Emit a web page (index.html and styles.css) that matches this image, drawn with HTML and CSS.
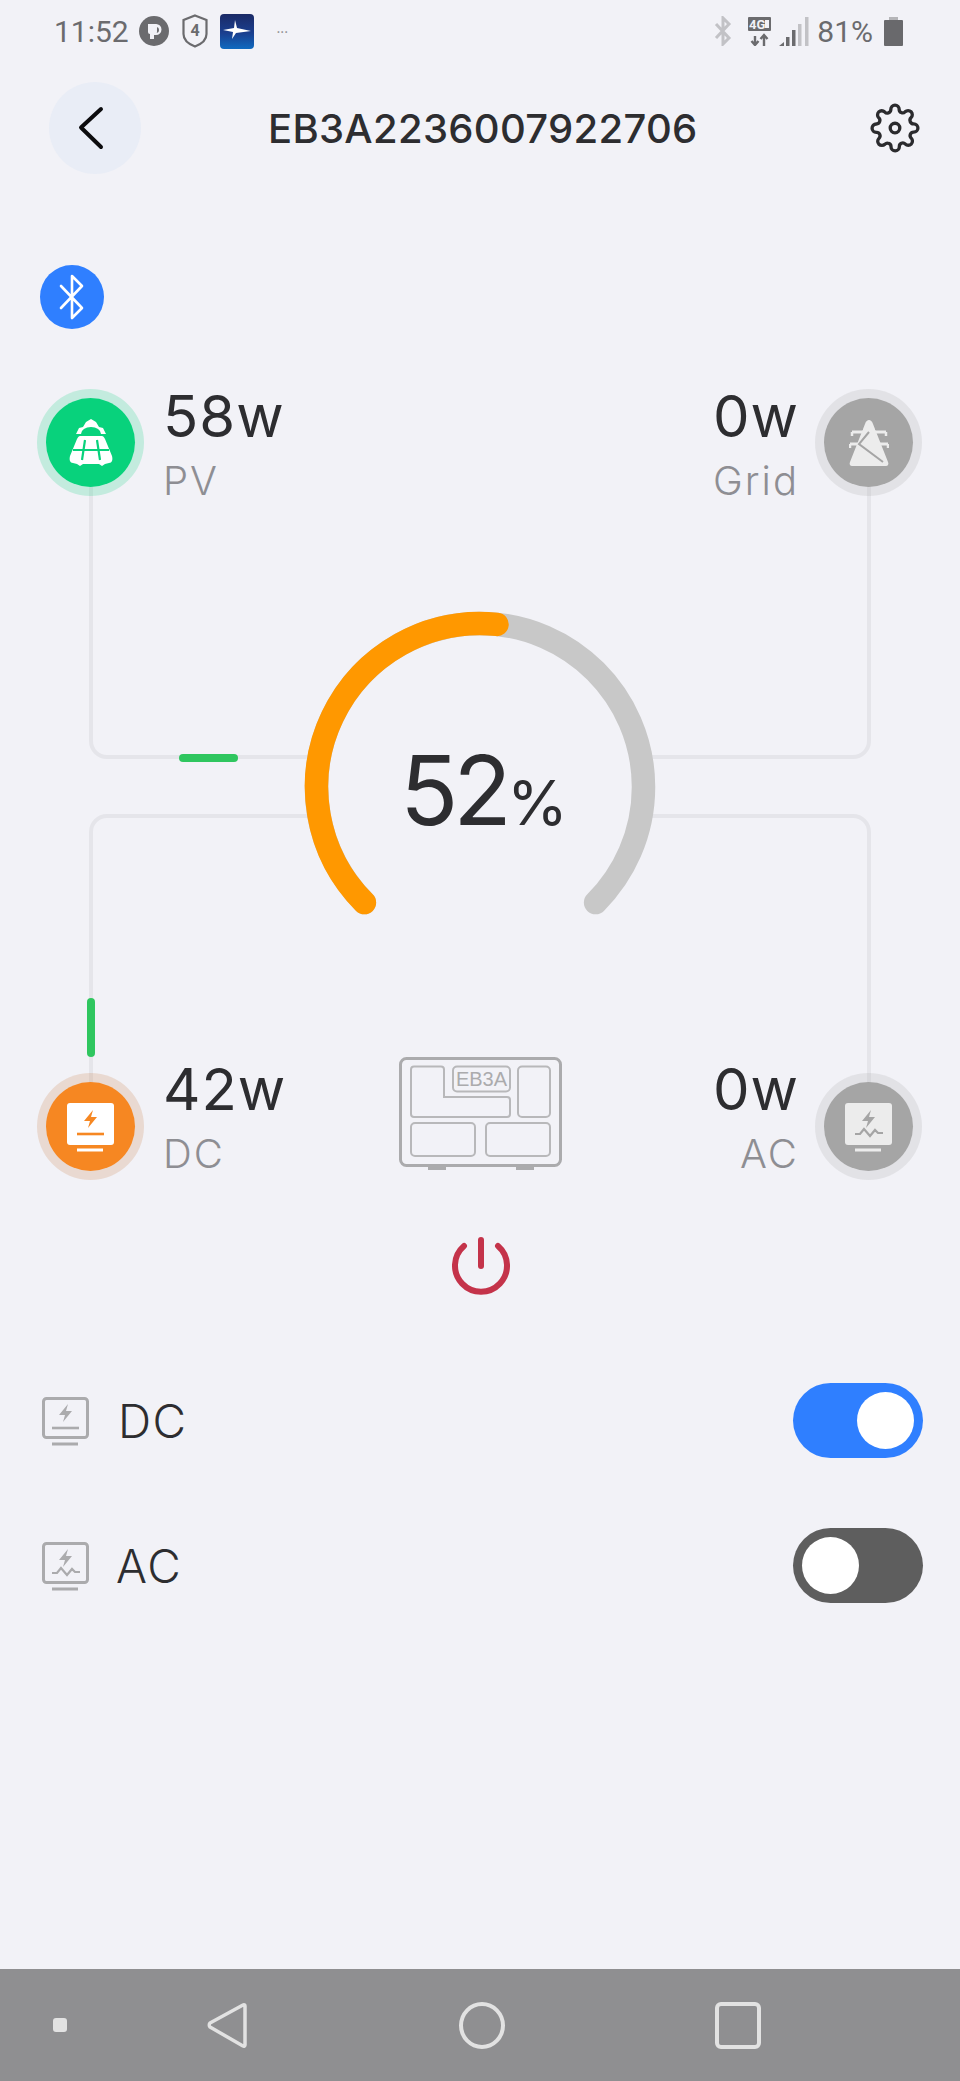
FILE: index.html
```html
<!DOCTYPE html>
<html lang="en">
<head>
  <meta charset="UTF-8" />
  <meta name="viewport" content="width=device-width, initial-scale=1.0"/>
  <title>EB3A2236007922706</title>
  <link rel="stylesheet" href="styles.css">
</head>
<body>
  <div class="screen">

    <!-- Status bar -->
    <div class="status-bar">
      <div class="status-left">
        <span class="status-text clock">11:52</span>
        <svg class="st-p" viewBox="0 0 30 30"><circle cx="15" cy="15" r="15" fill="#6b6b6e"/><path d="M9 8h8a5.500 5.500 0 0 1 0 11h-3v4h-3v-6h6a2.500 2.500 0 0 0 0-6H9z" fill="#f2f2f7"/><rect x="9" y="8" width="9" height="10" rx="2" fill="#f2f2f7"/><rect x="11" y="16" width="4" height="7" fill="#f2f2f7"/></svg>
        <svg class="st-shield" viewBox="0 0 26 34"><path d="M13 1.500 24.500 6v14c0 6-5 10-11.500 12.500C6.500 30 1.500 26 1.500 20V6z" fill="none" stroke="#6b6b6e" stroke-width="2.200"/><text x="13" y="22" text-anchor="middle" class="st-shield-num">4</text></svg>
        <svg class="st-app" viewBox="0 0 34 35">
          <defs><linearGradient id="appBlue" x1="0" y1="0" x2="0" y2="1"><stop offset="0" stop-color="#1b2a66"/><stop offset="0.55" stop-color="#1a3f8f"/><stop offset="1" stop-color="#0f6ac0"/></linearGradient></defs>
          <rect width="34" height="35" rx="4" fill="url(#appBlue)"/>
          <path d="M15 6l2 8 14 3-15 2-4 6 1-7-10-2 11-2z" fill="#fff"/>
        </svg>
        <span class="status-dots">•••</span>
      </div>
      <div class="status-right">
        <svg class="st-bt" viewBox="0 0 18 30"><path d="M2 8l13 14-6 6V2l6 6L2 22" fill="none" stroke="#c2c2c6" stroke-width="3"/></svg>
        <svg class="st-4g" viewBox="0 0 23 29"><rect width="23" height="14" rx="1" fill="#6b6b6e"/><text x="1" y="12" class="st-4g-text">4G</text><rect x="17" y="3" width="4" height="8" fill="#f2f2f7"/><path d="M7 29v-10M3.500 24l3.500 4 3.500-4M16 29V18M12.500 22l3.500-4 3.500 4" fill="none" stroke="#6b6b6e" stroke-width="2.400"/></svg>
        <svg class="st-signal" viewBox="0 0 30 29"><path d="M0 29l5-4v4z" fill="#6b6b6e"/><rect x="7" y="20" width="3.500" height="9" fill="#6b6b6e"/><rect x="13" y="13" width="3.500" height="16" fill="#6b6b6e"/><rect x="19" y="7" width="3.500" height="22" fill="#c2c2c6"/><rect x="26" y="0" width="3.500" height="29" fill="#c2c2c6"/></svg>
        <span class="status-text">81%</span>
        <svg class="st-batt" viewBox="0 0 19 29"><rect x="5" y="0" width="9" height="4" fill="#b5b5b8"/><rect y="3" width="19" height="26" rx="1" fill="#69696c"/></svg>
      </div>
    </div>

    <!-- Header -->
    <div class="header">
      <div class="back-btn">
        <svg viewBox="0 0 26 44" class="back-icon"><path d="M23 3 3 21.500 23 41" fill="none" stroke="#0c0c0e" stroke-width="4" stroke-linecap="round" stroke-linejoin="round"/></svg>
      </div>
      <h1 class="title">EB3A2236007922706</h1>
      <svg class="gear" viewBox="0 0 24 24" fill="none" stroke="#2b2b2e" stroke-width="1.600">
        <circle cx="12" cy="12" r="2.300"/>
        <path d="M19.400 15a1.650 1.650 0 0 0 .33 1.820l.06.06a2 2 0 0 1 0 2.830 2 2 0 0 1-2.830 0l-.06-.06a1.650 1.650 0 0 0-1.820-.33 1.650 1.650 0 0 0-1 1.510V21a2 2 0 0 1-2 2 2 2 0 0 1-2-2v-.09A1.650 1.650 0 0 0 9 19.400a1.650 1.650 0 0 0-1.820.33l-.06.06a2 2 0 0 1-2.830 0 2 2 0 0 1 0-2.830l.06-.06a1.650 1.650 0 0 0 .33-1.820 1.650 1.650 0 0 0-1.510-1H3a2 2 0 0 1-2-2 2 2 0 0 1 2-2h.09A1.650 1.650 0 0 0 4.600 9a1.650 1.650 0 0 0-.33-1.820l-.06-.06a2 2 0 0 1 0-2.830 2 2 0 0 1 2.830 0l.06.06a1.650 1.650 0 0 0 1.820.33H9a1.650 1.650 0 0 0 1-1.510V3a2 2 0 0 1 2-2 2 2 0 0 1 2 2v.09a1.650 1.650 0 0 0 1 1.510 1.650 1.650 0 0 0 1.820-.33l.06-.06a2 2 0 0 1 2.830 0 2 2 0 0 1 0 2.830l-.06.06a1.650 1.650 0 0 0-.33 1.820V9a1.650 1.650 0 0 0 1.510 1H21a2 2 0 0 1 2 2 2 2 0 0 1-2 2h-.09a1.650 1.650 0 0 0-1.510 1z"/>
      </svg>
    </div>

    <!-- Bluetooth -->
    <div class="bt-badge">
      <svg viewBox="0 0 26 46" class="bt-icon"><path d="M2 12l21 22-10 10V2l10 10L2 34" fill="none" stroke="#fff" stroke-width="2.600" stroke-linejoin="round" stroke-linecap="round"/></svg>
    </div>

    <!-- Energy flow diagram -->
    <div class="flow">
      <svg class="flow-lines" viewBox="0 380 960 830">
        <g fill="none" stroke="#e5e5ea" stroke-width="4">
          <path d="M91 442V741a16 16 0 0 0 16 16H320"/>
          <path d="M869 442V741a16 16 0 0 1-16 16H640"/>
          <path d="M91 1126V832a16 16 0 0 1 16-16H320"/>
          <path d="M869 1126V832a16 16 0 0 0-16-16H640"/>
        </g>
        <g stroke="#2fc65f" stroke-width="8" stroke-linecap="round">
          <path d="M183 758H234"/>
          <path d="M91 1002V1053"/>
        </g>
        <g fill="none" stroke-width="23.500" stroke-linecap="round">
          <path d="M364.400 902.600A163.500 163.500 0 1 1 595.600 902.600" stroke="#c8c8c8"/>
          <path d="M364.400 902.600A163.500 163.500 0 0 1 497 624.400" stroke="#ff9800"/>
        </g>
      </svg>

      <div class="gauge-label"><span class="gauge-num">52</span><span class="gauge-unit">%</span></div>

      <div class="node node-pv">
        <svg viewBox="0 0 44 48" class="node-icon-pv">
          <path d="M7 15l3-6 4-1 3-5 5-3 5 3 3 5 4 1 3 6z" fill="#fff"/>
          <path d="M12 15a10 7 0 0 1 20 0z" fill="#08d27c"/>
          <path d="M11 17h22c1 0 2 1 3 3l7 17c1 4 0 7-3 7l-4 1-3 2-3-2h-16l-3 2-3-2-4-1c-3 0-4-3-3-7l7-17c1-2 2-3 3-3z" fill="#fff"/>
          <path d="M4 31h36M16 21l-3 20M28 21l3 20" stroke="#08d27c" stroke-width="2.200" fill="none"/>
        </svg>
      </div>
      <div class="node node-grid">
        <svg viewBox="0 0 40 46" class="node-icon-grid">
          <path d="M20 0c1.500 0 3 1 4 4l15 38c1 2 0 4-2 4H3c-2 0-3-2-2-4L16 4c1-3 2.500-4 4-4z" fill="#ececec"/>
          <path d="M3 12h34M1 24h38" stroke="#ececec" stroke-width="3" fill="none"/>
          <path d="M3 12v4M37 12v4M1 24v4M39 24v4" stroke="#ececec" stroke-width="2.500" fill="none"/>
          <path d="M3 9h11M26 9h11M1 21h8M31 21h8" stroke="#a5a5a5" stroke-width="1.500" fill="none"/>
          <path d="M20 12 10 24l24 18" stroke="#a5a5a5" stroke-width="2" fill="none"/>
        </svg>
      </div>
      <div class="node node-dc">
        <svg viewBox="0 0 48 50" class="node-icon">
          <rect width="47" height="42" rx="3" fill="#fff"/>
          <path d="M26 7 17 18h6l-2 7 9-11h-6z" fill="#f68722"/>
          <path d="M10 31H37" stroke="#f68722" stroke-width="2.600"/>
          <path d="M10 47H36" stroke="#fff" stroke-width="3"/>
        </svg>
      </div>
      <div class="node node-ac">
        <svg viewBox="0 0 48 50" class="node-icon">
          <rect width="47" height="42" rx="3" fill="#ececec"/>
          <path d="M26 7 17 18h6l-2 7 9-11h-6z" fill="#a5a5a5"/>
          <path d="M10 31h5l4-5 6 7 5-6 3 3h5" stroke="#a5a5a5" stroke-width="2.200" fill="none"/>
          <path d="M10 47H36" stroke="#ececec" stroke-width="3"/>
        </svg>
      </div>

      <div class="stat stat-pv"><div class="stat-value">58w</div><div class="stat-name">PV</div></div>
      <div class="stat stat-grid"><div class="stat-value">0w</div><div class="stat-name">Grid</div></div>
      <div class="stat stat-dc"><div class="stat-value">42w</div><div class="stat-name">DC</div></div>
      <div class="stat stat-ac"><div class="stat-value">0w</div><div class="stat-name">AC</div></div>

      <svg class="device" viewBox="0 0 163 116">
        <rect x="1.500" y="1.500" width="160" height="107" rx="6" fill="none" stroke="#ababad" stroke-width="3"/>
        <path d="M29 110h18v3H29zM117 110h18v3h-18z" fill="#ababad"/>
        <g fill="none" stroke="#b8b8ba" stroke-width="2">
          <path d="M15 9.500h27a3 3 0 0 1 3 3V40h63a3 3 0 0 1 3 3v14a3 3 0 0 1-3 3H15a3 3 0 0 1-3-3V12.500a3 3 0 0 1 3-3z"/>
          <rect x="54" y="9.500" width="57" height="25" rx="4"/>
          <rect x="119" y="9.500" width="32" height="50.500" rx="4"/>
          <rect x="12" y="66" width="64" height="33" rx="4"/>
          <rect x="87" y="66" width="64" height="33" rx="4"/>
        </g>
        <text x="82.500" y="29" text-anchor="middle" class="device-text">EB3A</text>
      </svg>
    </div>

    <!-- Power -->
    <svg class="power" viewBox="0 0 58 58" fill="none" stroke="#c4334a" stroke-width="6" stroke-linecap="round">
      <path d="M12 9a26 26 0 1 0 34 0"/>
      <path d="M29 3V29"/>
    </svg>

    <!-- Outputs -->
    <div class="output-row first">
      <svg viewBox="0 0 48 50" class="row-icon">
        <rect x="1.500" y="1.500" width="44" height="39" rx="3" fill="none" stroke="#ababad" stroke-width="3"/>
        <path d="M26 7 17 18h6l-2 7 9-11h-6z" fill="#ababad"/>
        <path d="M10 31H37" stroke="#ababad" stroke-width="2.600"/>
        <path d="M10 47H36" stroke="#ababad" stroke-width="3"/>
      </svg>
      <span class="row-label">DC</span>
      <div class="toggle on"><div class="knob"></div></div>
    </div>
    <div class="output-row">
      <svg viewBox="0 0 48 50" class="row-icon">
        <rect x="1.500" y="1.500" width="44" height="39" rx="3" fill="none" stroke="#ababad" stroke-width="3"/>
        <path d="M26 7 17 18h6l-2 7 9-11h-6z" fill="#ababad"/>
        <path d="M10 31h5l4-5 6 7 5-6 3 3h5" stroke="#ababad" stroke-width="2.200" fill="none"/>
        <path d="M10 47H36" stroke="#ababad" stroke-width="3"/>
      </svg>
      <span class="row-label row-label-ac">AC</span>
      <div class="toggle"><div class="knob"></div></div>
    </div>

    <!-- Android nav bar -->
    <div class="nav-bar">
      <div class="nav-dot"></div>
      <svg class="nav-back" viewBox="0 0 40 47"><path d="M36 3 3 21c-1 1-1 3 0 4l33 19c1 .5 2 0 2-1V4c0-1-1-1.500-2-1z" fill="none" stroke="#e2e2e2" stroke-width="3.500" stroke-linejoin="round"/></svg>
      <div class="nav-home"></div>
      <div class="nav-recent"></div>
    </div>
  </div>
</body>
</html>
```

FILE: styles.css
```css
:root {
  --bg: #f2f2f7;
  --text-main: #2d2d30;
  --text-muted: #8e8e93;
  --blue: #2f7fff;
  --status: #6b6b6e;
}

body {
  margin: 0;
  background: var(--bg);
  color: var(--text-main);
  font-family: "Inter", sans-serif;
}

.screen {
  width: 960px;
  height: 2081px;
  display: flex;
  flex-direction: column;
  overflow: hidden;
}

/* status bar */
.status-bar {
  height: 62px;
  display: flex;
  justify-content: space-between;
  align-items: center;
  padding: 0 57px 0 54px;
  box-sizing: border-box;
}

.status-left,
.status-right {
  display: flex;
  align-items: center;
}

.status-text {
  font-family: "Roboto", sans-serif;
  font-size: 30px;
  color: var(--status);
}

.st-p { width: 30px; height: 30px; margin-left: 10px; }
.st-shield { width: 26px; height: 34px; margin-left: 13px; }
.st-shield-num { font-family: "Roboto", sans-serif; font-size: 16px; font-weight: 700; fill: #6b6b6e; }
.st-app { width: 34px; height: 35px; margin-left: 12px; }
.status-dots { font-size: 6px; color: #8a8a8d; margin-left: 23px; letter-spacing: 0.5px; }

.st-bt { width: 18px; height: 30px; margin-right: 16px; }
.st-4g { width: 23px; height: 29px; margin-right: 8px; }
.st-4g-text { font-family: "Roboto", sans-serif; font-size: 13px; font-weight: 700; fill: #f2f2f7; }
.st-signal { width: 30px; height: 29px; margin-right: 8px; }
.st-batt { width: 19px; height: 29px; margin-left: 11px; }

/* header */
.header {
  height: 92px;
  margin-top: 20px;
  padding: 0 40px 0 49px;
  display: flex;
  align-items: center;
}

.back-btn {
  width: 92px;
  height: 92px;
  border-radius: 50%;
  background: #e9edf6;
  display: flex;
  align-items: center;
  justify-content: center;
}

.back-icon { width: 26px; height: 44px; margin-right: 8px; }

.title {
  margin: 0 0 0 127px;
  font-size: 40px;
  font-weight: 500;
  letter-spacing: 0.3px;
  color: var(--text-main);
}

.gear { width: 50px; height: 50px; margin-left: auto; }

/* bluetooth */
.bt-badge {
  width: 64px;
  height: 64px;
  margin: 91px 0 0 40px;
  border-radius: 50%;
  background: var(--blue);
  display: flex;
  align-items: center;
  justify-content: center;
}

.bt-icon { width: 26px; height: 46px; }

/* flow diagram: everything in here is placed on the canvas */
.flow {
  position: relative;
  height: 830px;
  margin-top: 51px;
}

.flow-lines {
  position: absolute;
  left: 0;
  top: 0;
  width: 960px;
  height: 830px;
}

.gauge-label {
  position: absolute;
  left: 400px;
  top: 353px;
  font-size: 96px;
  line-height: 114px;
}

.gauge-num {
  letter-spacing: -5px;
}

.gauge-unit {
  font-size: 62px;
}

.node {
  position: absolute;
  width: 89px;
  height: 89px;
  border-radius: 50%;
  display: flex;
  align-items: center;
  justify-content: center;
}

.node-pv { left: 46px; top: 18px; background: #08d27c; box-shadow: 0 0 0 9px rgba(8, 210, 124, 0.2); }
.node-grid { left: 824px; top: 18px; background: #a5a5a5; box-shadow: 0 0 0 9px rgba(165, 165, 165, 0.2); }
.node-dc { left: 46px; top: 702px; background: #f68722; box-shadow: 0 0 0 9px rgba(200, 120, 60, 0.2); }
.node-ac { left: 824px; top: 702px; background: #a5a5a5; box-shadow: 0 0 0 9px rgba(165, 165, 165, 0.2); }

.node-icon { width: 48px; height: 50px; margin-top: 2px; }
.node-icon-pv { width: 44px; height: 48px; }
.node-icon-grid { width: 40px; height: 46px; }

.stat {
  position: absolute;
  display: flex;
  flex-direction: column;
}

.stat-pv { left: 163px; top: 3px; }
.stat-dc { left: 163px; top: 676px; }
.stat-grid { right: 161px; top: 3px; text-align: right; }
.stat-ac { right: 161px; top: 676px; text-align: right; }

.stat-value {
  font-size: 58px;
  line-height: 66px;
  letter-spacing: 1px;
}

.stat-name {
  margin-top: 9px;
  font-size: 40px;
  font-weight: 300;
  line-height: 46px;
  letter-spacing: 2px;
  color: var(--text-muted);
}

.device {
  position: absolute;
  left: 399px;
  top: 677px;
  width: 163px;
  height: 116px;
}

.device-text {
  font-family: "Liberation Sans", sans-serif;
  font-size: 20px;
  fill: #ababad;
}

/* power */
.power {
  width: 58px;
  height: 58px;
  margin: 27px 0 0 452px;
}

/* output rows */
.output-row {
  height: 75px;
  margin-top: 70px;
  padding: 0 37px 0 42px;
  display: flex;
  align-items: center;
}

.output-row.first { margin-top: 88px; }

.row-icon { width: 48px; height: 50px; margin-top: 2px; }

.row-label {
  margin-left: 28px;
  font-size: 46px;
  font-weight: 300;
  letter-spacing: 1.5px;
}

.row-label-ac { margin-left: 26px; }

.toggle {
  width: 130px;
  height: 75px;
  margin-left: auto;
  border-radius: 38px;
  background: #5e5e5e;
  display: flex;
  align-items: center;
  padding: 0 9px;
  box-sizing: border-box;
}

.toggle.on {
  background: var(--blue);
  justify-content: flex-end;
}

.knob {
  width: 57px;
  height: 57px;
  border-radius: 50%;
  background: #fff;
}

/* nav bar */
.nav-bar {
  margin-top: auto;
  height: 112px;
  background: #8f8f91;
  display: flex;
  align-items: center;
  padding-left: 53px;
}

.nav-dot {
  width: 14px;
  height: 14px;
  border-radius: 3px;
  background: #e2e2e2;
}

.nav-back { width: 40px; height: 47px; margin-left: 140px; }

.nav-home {
  width: 46px;
  height: 47px;
  margin-left: 212px;
  border: 4px solid #e2e2e2;
  border-radius: 50%;
  box-sizing: border-box;
}

.nav-recent {
  width: 46px;
  height: 47px;
  margin-left: 210px;
  border: 4px solid #e2e2e2;
  border-radius: 6px;
  box-sizing: border-box;
}
```
